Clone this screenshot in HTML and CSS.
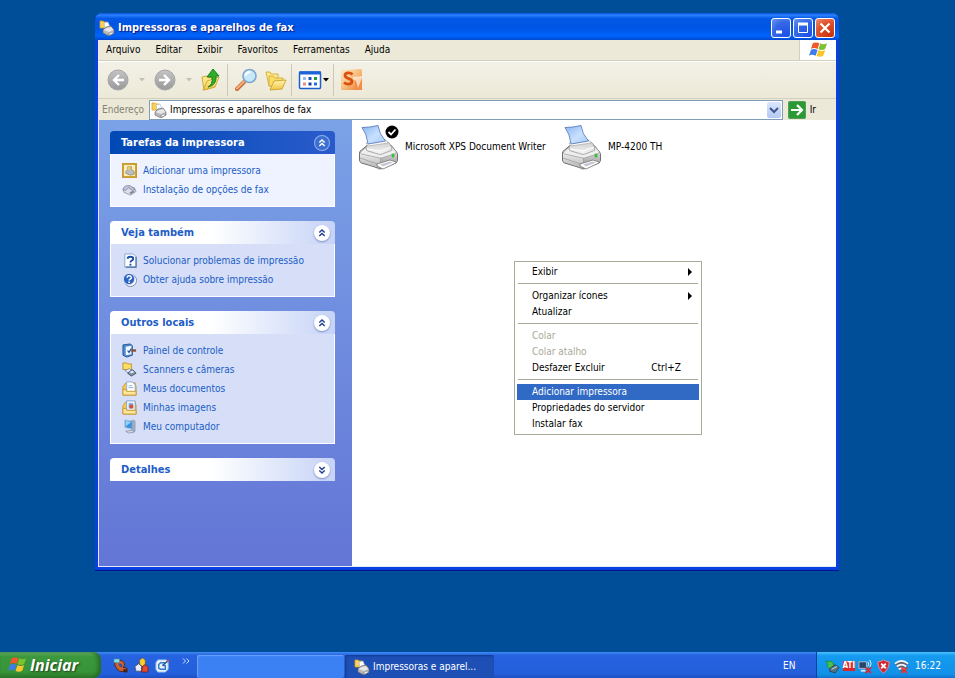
FILE: index.html
```html
<!DOCTYPE html>
<html lang="pt-BR">
<head>
<meta charset="utf-8">
<title>Impressoras e aparelhos de fax</title>
<link rel="stylesheet" href="styles.css">
</head>
<body>
<svg class="defs" aria-hidden="true">
  <defs>
    <linearGradient id="paper" x1="0" y1="0" x2="1" y2="1"><stop offset="0" stop-color="#86b4f2"/><stop offset=".55" stop-color="#c9e0fd"/><stop offset="1" stop-color="#a3cbfa"/></linearGradient>
    <linearGradient id="hood" x1="0" y1="0" x2="0" y2="1"><stop offset="0" stop-color="#cfcfcf"/><stop offset="1" stop-color="#f7f7f7"/></linearGradient>
    <linearGradient id="front" x1="0" y1="0" x2="0" y2="1"><stop offset="0" stop-color="#ededed"/><stop offset="1" stop-color="#b4b4b4"/></linearGradient>
    <linearGradient id="side" x1="0" y1="0" x2="0" y2="1"><stop offset="0" stop-color="#d6d6d6"/><stop offset="1" stop-color="#8c8c8c"/></linearGradient>
    <linearGradient id="grey" x1="0" y1="0" x2="0" y2="1"><stop offset="0" stop-color="#c4c4c4"/><stop offset="1" stop-color="#999"/></linearGradient>
    <linearGradient id="folder" x1="0" y1="0" x2="0" y2="1"><stop offset="0" stop-color="#fff6b0"/><stop offset="1" stop-color="#f0c445"/></linearGradient>
    <linearGradient id="office" x1="0" y1="0" x2="1" y2="1"><stop offset="0" stop-color="#fdeacb"/><stop offset=".5" stop-color="#f7bd7c"/><stop offset="1" stop-color="#ea7a30"/></linearGradient>
    <symbol id="printer" viewBox="0 0 42 46">
      <path d="M2 37l20 9 17-7v-3L22 41z" fill="#000" opacity=".25"/>
      <path d="M1.500 29q0-2 2-3l6-5h22q2 0 3 2l4 5q1 1 1 3v5q0 2-2 3l-13 5q-2 1-4 0L3.500 39q-2-1-2-3z" fill="#c4c4c4" stroke="#6f6f6f"/>
      <path d="M2 29l20.500 5v10.500L3.500 38Q2 37 2 36z" fill="url(#front)"/>
      <path d="M22.500 34L39 29v7q0 2-2 3l-14.500 6z" fill="url(#side)"/>
      <path d="M2.500 28l7-6 23-1 6 7q0 1-2 2l-13 4-2 0-18-4q-2-1-1-2z" fill="#eee" stroke="#8b8b8b" stroke-width=".6"/>
      <path d="M8 24q0-3 3-3l18-3q2 0 3 2l2 5q0 2-2 2l-8 3q-2 1-4 0l-10-3q-2 0-2-3z" fill="url(#hood)" stroke="#8c8c8c" stroke-width=".7"/>
      <path d="M9 25l12 2q2 0 4-1l8-3" fill="none" stroke="#fff"/>
      <path d="M2 34l20.500 7M22.500 34v10" fill="none" stroke="#9a9a9a" stroke-width=".7"/>
      <path d="M8 19l20-3 2 3-20 3z" fill="#fafafa" stroke="#a3a3a3" stroke-width=".6"/>
      <path d="M4 3.500q8 0 16-2Q21 10 27.500 17L10 20Q9 10 4 3.500z" fill="url(#paper)" stroke="#5b7cba" stroke-width=".9"/>
      <path d="M19 40l13-4 6 2v1l-13 6-6-3z" fill="#fff" stroke="#666" stroke-width=".7"/>
      <path d="M22 40.500l10-3 3 1-10 4z" fill="#c3c8d2"/>
      <rect x="34" y="30" width="2" height="3" fill="#35dd2f" stroke="#2b9a2c" stroke-width=".5"/>
    </symbol>
    <symbol id="printers" viewBox="0 0 16 16">
      <path d="M1 1h3l1 1h3v6H1z" fill="#fbd258" stroke="#dba028" stroke-width=".8"/>
      <path d="M5 3l4-1 2 5-5 2z" fill="#fff" stroke="#9db2d2" stroke-width=".6"/>
      <path d="M4 10l3-3 5-1 3 4v3l-5 3-6-3z" fill="#b9b9bc" stroke="#6b6b6e" stroke-width=".7"/>
      <path d="M4.500 10L8 8l4-1 2.500 3L10 12z" fill="#e6e6e6"/>
      <path d="M9 14l4-2 2 1-4 2z" fill="#fff" stroke="#666" stroke-width=".5"/>
    </symbol>
    <symbol id="flag" viewBox="0 0 20 18">
      <path d="M4 2q3-2 7 0L9 8Q5 6 2 8z" fill="#f0582b"/>
      <path d="M12 2q3 2 7 0l-2 6q-4 2-7 0z" fill="#7cc130"/>
      <path d="M2 9q3-2 7 0l-2 6q-4-2-7 0z" fill="#3f7ee8"/>
      <path d="M10 9q3 2 7 0l-2 6q-4 2-7 0z" fill="#fbc52c"/>
    </symbol>
    <symbol id="collapse" viewBox="0 0 18 18"><path d="M6 8.500l3-3 3 3M6 12.500l3-3 3 3" fill="none" stroke="currentColor" stroke-width="1.600"/></symbol>
    <symbol id="expand" viewBox="0 0 18 18"><path d="M6 5.500l3 3 3-3M6 9.500l3 3 3-3" fill="none" stroke="currentColor" stroke-width="1.600"/></symbol>
    <symbol id="down" viewBox="0 0 6 4"><path d="M0 0h6L3 3.500z" fill="currentColor"/></symbol>
  </defs>
</svg>

<div class="desktop">
  <main class="window">
    <header class="titlebar">
      <svg class="i16"><use href="#printers"/></svg>
      <h1>Impressoras e aparelhos de fax</h1>
      <button class="cap" aria-label="Minimizar"><svg viewBox="0 0 18 18"><path d="M4 13h6" stroke="#fff" stroke-width="3"/></svg></button>
      <button class="cap" aria-label="Maximizar"><svg viewBox="0 0 18 18"><path d="M4.500 5v8.500h9V5" fill="none" stroke="#fff"/><path d="M4 5h10" stroke="#fff" stroke-width="3"/></svg></button>
      <button class="cap close" aria-label="Fechar"><svg viewBox="0 0 18 18"><path d="M4.500 4.500l9 9m0-9l-9 9" stroke="#fff" stroke-width="2.200"/></svg></button>
    </header>

    <nav class="menubar" aria-label="Menu">
      <button>Arquivo</button><button>Editar</button><button>Exibir</button><button>Favoritos</button><button>Ferramentas</button><button>Ajuda</button>
      <span class="brand"><svg><use href="#flag"/></svg></span>
    </nav>

    <div class="toolbar">
      <button class="tool" aria-label="Voltar"><svg viewBox="0 0 24 24"><circle cx="12" cy="12" r="10" fill="url(#grey)" stroke="#a5a5a5"/><path d="M18 12H8m5-5l-5 5 5 5" fill="none" stroke="#fff" stroke-width="2.400"/></svg></button>
      <button class="drop off" aria-label="Histórico anterior"><svg><use href="#down"/></svg></button>
      <button class="tool" aria-label="Avançar"><svg viewBox="0 0 24 24"><circle cx="12" cy="12" r="10" fill="url(#grey)" stroke="#a5a5a5"/><path d="M6 12h10m-5-5l5 5-5 5" fill="none" stroke="#fff" stroke-width="2.400"/></svg></button>
      <button class="drop off" aria-label="Próximo histórico"><svg><use href="#down"/></svg></button>
      <button class="tool" aria-label="Acima"><svg viewBox="0 0 24 24"><path d="M2 9l5-1 2 2 6-2v11L4 22z" fill="#fbe68a" stroke="#d3aa36"/><path d="M3 22l4-9 12-4-4 10z" fill="url(#folder)" stroke="#d3aa36"/><path d="M8 19q5-2 4-10H7l6-8 6 7h-3q1 9-8 11z" fill="#2fae2c" stroke="#1a7f20"/></svg></button>
      <span class="rule"></span>
      <button class="tool" aria-label="Pesquisar"><svg viewBox="0 0 24 24"><path d="M3 21l7-7" stroke="#c76a35" stroke-width="4" stroke-linecap="round"/><path d="M3 20.500l7-7" stroke="#f4b27a" stroke-width="2" stroke-linecap="round"/><circle cx="15.500" cy="8" r="6.500" fill="#c6e8fb" stroke="#7fa6cf" stroke-width="1.600"/><path d="M11.500 7.500q1-4 5-3.500" fill="none" stroke="#fff" stroke-width="2"/></svg></button>
      <button class="tool" aria-label="Pastas"><svg viewBox="0 0 24 24"><path d="M2 4h4l1.500 2H14v10L5 18z" fill="#fce98e" stroke="#d6ac38" stroke-width=".9"/><path d="M5 18V8h4l2 2h8v8z" fill="#f9dc69" stroke="#d6ac38" stroke-width=".9"/><path d="M6 22l4-9 12-1-4 9z" fill="url(#folder)" stroke="#cda02a" stroke-width=".9"/></svg></button>
      <span class="rule"></span>
      <button class="tool" aria-label="Modos de exibição"><svg viewBox="0 0 24 24"><rect x="1.500" y="4" width="21" height="16.500" rx="1" fill="#fff" stroke="#1c5fca" stroke-width="1.500"/><path d="M1 5h22" stroke="#1c62d8" stroke-width="3"/><path d="M5 9h3v3H5z" fill="#9bb6e8"/><path d="M10.500 9h3v3h-3z" fill="#2453c8"/><path d="M16 9h3v3h-3z" fill="#249b3a"/><path d="M5 14.500h3v3H5z" fill="#e88d7d"/><path d="M10.500 14.500h3v3h-3z" fill="#1d3f9e"/><path d="M16 14.500h3v3h-3z" fill="#2c6fe0"/></svg></button>
      <button class="drop narrow" aria-label="Escolher modo"><svg><use href="#down"/></svg></button>
      <span class="rule"></span>
      <button class="tool" aria-label="Apresentações"><svg viewBox="0 0 24 24"><path d="M1 2l20-1 1 1v20H1z" fill="url(#office)"/><path d="M15 12l7-2v12h-7z" fill="#f28c48"/><path d="M13 9l9-1v2l-4 10-2-7-3-2z" fill="#fff2e2" opacity=".7"/><path d="M12.500 6.500C10 4 5 4.500 5 7.500c0 3.500 7 2.500 7 6 0 3-5 3.500-8 1" fill="none" stroke="#d9500f" stroke-width="2.800"/></svg></button>
    </div>

    <form class="address">
      <label for="path">Endereço</label>
      <div class="combo">
        <svg class="i16"><use href="#printers"/></svg>
        <input id="path" type="text" value="Impressoras e aparelhos de fax">
        <button type="button" aria-label="Abrir lista"><svg viewBox="0 0 10 8"><path d="M1 2l4 4 4-4" fill="none" stroke="#3f5687" stroke-width="2"/></svg></button>
      </div>
      <button class="go" type="button"><svg viewBox="0 0 18 18"><rect x=".5" y=".5" width="17" height="17" rx="1" fill="#2b9a35" stroke="#53a05a"/><path d="M3 9h11M9 4l5 5-5 5" fill="none" stroke="#fff" stroke-width="2.200"/></svg>Ir</button>
    </form>

    <div class="content">
      <aside class="tasks">
        <section class="box primary">
          <h2>Tarefas da impressora<button aria-label="Recolher"><svg><use href="#collapse"/></svg></button></h2>
          <ul>
            <li><a href="#"><svg viewBox="0 0 16 16"><rect x="1" y="1" width="14" height="14" fill="#f9eebb" stroke="#c79a2a" stroke-width="2"/><path d="M4 9l2-2V4h4v3l3 2v3l-4 1-5-2z" fill="#b9bdc6" stroke="#8a7d55" stroke-width=".7"/><path d="M6 4h3v3H6z" fill="#f5cf52"/></svg>Adicionar uma impressora</a></li>
            <li><a href="#"><svg viewBox="0 0 16 16"><path d="M1 8l5-3 7 1 2 4-6 4-7-3z" fill="#dedee8" stroke="#8a8a99" stroke-width=".8"/><path d="M1 8q1-5 8-4l5 4-3 1-4-3-3 3z" fill="#c4c4dc" stroke="#7d7d9c" stroke-width=".8"/><path d="M8 11l5-2v2l-4 2z" fill="#8087a0"/></svg>Instalação de opções de fax</a></li>
          </ul>
        </section>
        <section class="box">
          <h2>Veja também<button aria-label="Recolher"><svg><use href="#collapse"/></svg></button></h2>
          <ul>
            <li><a href="#"><svg viewBox="0 0 16 16"><path d="M3 1h9l3 3v11H3z" fill="#fff" stroke="#7fa3d2"/><path d="M15 4v11H4" fill="none" stroke="#4a6d9e" stroke-width="1.200"/><path d="M6 6q0-2 3-2t3 2c0 2-3 2-3 4" fill="none" stroke="#184fa5" stroke-width="2"/><path d="M8 11.500h2v2H8z" fill="#184fa5"/></svg>Solucionar problemas de impressão</a></li>
            <li><a href="#"><svg viewBox="0 0 16 16"><circle cx="9" cy="9" r="6.500" fill="#fff" stroke="#7184a8"/><circle cx="7.500" cy="7.500" r="6" fill="#2b62c4" stroke="#d8e3f8"/><path d="M5.500 6q0-2 2-2t2.500 2c0 1.500-2.500 1.500-2.500 3" fill="none" stroke="#fff" stroke-width="1.600"/><path d="M6.700 10h1.800v1.800H6.700z" fill="#fff"/></svg>Obter ajuda sobre impressão</a></li>
          </ul>
        </section>
        <section class="box">
          <h2>Outros locais<button aria-label="Recolher"><svg><use href="#collapse"/></svg></button></h2>
          <ul>
            <li><a href="#"><svg viewBox="0 0 16 16"><path d="M1 2l8-1 2 2v10l-6 2-4-2z" fill="#4d8ad4" stroke="#2a5590"/><path d="M4 4l6-1v9l-6 1z" fill="#f1f8ff"/><path d="M6 8l1.500 2L10 6" fill="none" stroke="#274f91" stroke-width="1.300"/><path d="M10 8l5 0" stroke="#8b5033" stroke-width="2.500"/></svg>Painel de controle</a></li>
            <li><a href="#"><svg viewBox="0 0 16 16"><path d="M1 1h4l1 1h4v6H1z" fill="#ffdc62" stroke="#c1922a"/><path d="M3 9l5-2 3 3-4 2z" fill="#dbe8f5" stroke="#7c8896" stroke-width=".8"/><path d="M6 12l5-4 4 4-5 3z" fill="#7f92ab" stroke="#46566b"/><path d="M8 11l3-2 2 2-3 1z" fill="#e5f0fb"/></svg>Scanners e câmeras</a></li>
            <li><a href="#"><svg viewBox="0 0 16 16"><path d="M1 6l3-4h10l1 4v9H1z" fill="#f5cb56" stroke="#c79a33"/><path d="M5 1h6l3 3v8H5z" fill="#fff" stroke="#8fabd0"/><path d="M7 5h4M7 7h5" stroke="#8caede"/><path d="M1 9h3l1 2h10v4H1z" fill="#ffe797" stroke="#c79a33"/></svg>Meus documentos</a></li>
            <li><a href="#"><svg viewBox="0 0 16 16"><path d="M1 6l3-4h10l1 4v9H1z" fill="#f5cb56" stroke="#c79a33"/><path d="M5 1h9v10H5z" fill="#fff" stroke="#7f9fc8"/><path d="M7 3h5v6H7z" fill="#7fb0e8"/><path d="M8 5h4v4H8z" fill="#d55038"/><path d="M1 9h3l1 2h10v4H1z" fill="#ffe797" stroke="#c79a33"/></svg>Minhas imagens</a></li>
            <li><a href="#"><svg viewBox="0 0 16 16"><path d="M3 1l8 1v9l-8-2z" fill="#3991e0" stroke="#b3c3d6"/><path d="M4 2l6 1-6 5z" fill="#97d2fb"/><path d="M11 1l3 1v11l-3 1z" fill="#a2afc2" stroke="#7c8ba1" stroke-width=".5"/><path d="M4 13l7-1 2 2-6 1z" fill="#d3dae4" stroke="#77859b" stroke-width=".7"/></svg>Meu computador</a></li>
          </ul>
        </section>
        <section class="box">
          <h2>Detalhes<button aria-label="Expandir"><svg><use href="#expand"/></svg></button></h2>
        </section>
      </aside>

      <div class="files">
        <div class="file">
          <svg class="big" viewBox="0 0 42 46"><use href="#printer"/><circle cx="34" cy="8" r="6.500" fill="#000"/><path d="M30.500 8l2.500 2.500 4.500-5" fill="none" stroke="#fff" stroke-width="1.800"/></svg>
          <span>Microsoft XPS Document Writer</span>
        </div>
        <div class="file">
          <svg class="big" viewBox="0 0 42 46"><use href="#printer"/></svg>
          <span>MP-4200 TH</span>
        </div>

        <div class="context" role="menu">
          <button role="menuitem">Exibir<i class="sub"></i></button>
          <hr>
          <button role="menuitem">Organizar ícones<i class="sub"></i></button>
          <button role="menuitem">Atualizar</button>
          <hr>
          <button role="menuitem" disabled>Colar</button>
          <button role="menuitem" disabled>Colar atalho</button>
          <button role="menuitem">Desfazer Excluir<kbd>Ctrl+Z</kbd></button>
          <hr>
          <button role="menuitem" class="active">Adicionar impressora</button>
          <button role="menuitem">Propriedades do servidor</button>
          <button role="menuitem">Instalar fax</button>
        </div>
      </div>
    </div>
  </main>

  <footer class="taskbar">
    <button class="start"><svg><use href="#flag"/></svg>Iniciar</button>
    <div class="quick">
      <button aria-label="Discador"><svg viewBox="0 0 16 16"><path d="M2 4q-1 6 5 10l8 1v-4l-4-1q3-4-1-7L5 2z" fill="#d3602b" stroke="#53220f"/><path d="M6 6q4-1 4 4l-3-1z" fill="#2853b0"/><path d="M11 12h4v3h-4z" fill="#3b2620"/><path d="M1 1h6v4H1z" fill="#7fe0ef" stroke="#487b8c" stroke-width=".6"/></svg></button>
      <button aria-label="Formas"><svg viewBox="0 0 16 16"><path d="M6 2l3-2 3 2v5L9 9 6 7z" fill="#f9cf34" stroke="#7d5a12" stroke-width=".7"/><path d="M1 9l4-3 3 3v5H2z" fill="#e9edf6" stroke="#34405e" stroke-width=".7"/><path d="M9 9l3-2 3 3v5H8z" fill="#e34a30" stroke="#611911" stroke-width=".7"/></svg></button>
      <button aria-label="Mostrar área de trabalho"><svg viewBox="0 0 16 16"><path d="M3 2h9l2 3v7l-3 3H3l-2-3V5z" fill="#e9f3ff" stroke="#9cc0ee"/><path d="M11 5H6L4 7v4l2 1h5V8H8" fill="none" stroke="#3579c4" stroke-width="1.500"/><path d="M8 8l6-5" stroke="#254f91" stroke-width="1.500"/><path d="M13 2h2v2h-2z" fill="#e3572f"/></svg></button>
      <button class="more" aria-label="Mais"><svg viewBox="0 0 8 6"><path d="M1 .5l2.500 2.500L1 5.500M4.500 .5L7 3 4.500 5.500" fill="none" stroke="#cfe0ff"/></svg></button>
    </div>
    <button class="task" aria-label="Janela"></button>
    <button class="task pressed"><svg class="i16"><use href="#printers"/></svg>Impressoras e aparel...</button>
    <span class="lang">EN</span>
    <div class="tray">
      <svg viewBox="0 0 16 16"><path d="M1 2l4 1 1-1 3 2v4l-3 3-4-3 1-2z" fill="#43c251" stroke="#19852b" stroke-width=".8"/><path d="M5 10l6-4 4 3-4 6-6-2z" fill="#56727f" stroke="#203c4c" stroke-width=".8"/><path d="M7 11l6-3" stroke="#c9e4ee"/></svg>
      <span class="ati">ATI</span>
      <svg viewBox="0 0 16 16"><path d="M1 3h8v7H1z" fill="#2c4266" stroke="#aebfd6"/><path d="M3 12.500h5" stroke="#dbe4f2" stroke-width="2"/><path d="M10.500 3q2 2.500 0 5m2-7q3 4 0 8" fill="none" stroke="#e9f6ff"/><path d="M8 9l6 6m0-6l-6 6" stroke="#e0262b" stroke-width="1.800"/></svg>
      <svg viewBox="0 0 16 16"><path d="M8 1q3 2 6 2 0 8-6 12Q2 11 2 3q3 0 6-2z" fill="#d3262f" stroke="#ee8f92"/><path d="M5.500 5l5 5m0-5l-5 5" stroke="#fff" stroke-width="2"/></svg>
      <svg viewBox="0 0 16 16"><path d="M1 5q7-6 14 0L8 14z" fill="#5c6275"/><path d="M1 5q7-6 14 0M3 8q5-4 10 0M5 11q3-2 6 0" fill="none" stroke="#f6f7fb" stroke-width="1.800"/><path d="M8 9l6 6m0-6l-6 6" stroke="#e8322f" stroke-width="2"/></svg>
      <time>16:22</time>
    </div>
  </footer>
</div>
</body>
</html>
```
FILE: styles.css
```css
* { box-sizing: border-box; }

body {
  margin: 0;
  font: 10px/16px "DejaVu Sans Condensed", "DejaVu Sans", sans-serif;
  color: #000;
}

button, input {
  font: inherit;
  color: inherit;
  border: 0;
  padding: 0;
  margin: 0;
  background: none;
}

svg { display: block; flex: none; }
.defs { position: absolute; width: 0; height: 0; }
.i16 { width: 16px; height: 16px; }

.desktop {
  min-height: 100vh;
  display: flex;
  flex-direction: column;
  background: #004e98;
}

/* Window frame */
.window {
  flex: 1;
  display: flex;
  flex-direction: column;
  margin: 13px 116px 82px 95px;
  border: 3px solid #0a3fe0;
  border-top: 0;
  border-radius: 7px 7px 0 0;
  background: #ece9d8;
  box-shadow: 0 1px 0 #00138c;
}

.titlebar {
  display: flex;
  align-items: center;
  gap: 2px;
  height: 27px;
  margin: 0 -3px;
  padding: 2px 4px 0;
  border-radius: 7px 7px 0 0;
  background: linear-gradient(#0a52d8, #2a80ff 8%, #0458e6 20%, #0054e3 55%, #0064fc 85%, #0048d0);
  color: #fff;
}

.titlebar h1 {
  flex: 1;
  margin: 0 0 0 1px;
  font-size: 11px;
  font-weight: bold;
  text-shadow: 1px 1px 1px #0a1883;
}

.cap {
  width: 20px;
  height: 20px;
  border: 1px solid #fff;
  border-radius: 3px;
  background: radial-gradient(circle at 80% 90%, #1c4fe8, #3568e6 60%, #6e94f2);
}

.cap svg { width: 18px; height: 18px; }
.close { background: radial-gradient(circle at 80% 90%, #c9330c, #e0512c 60%, #f08f71); }

/* Menu and tool bars */
.menubar {
  display: flex;
  align-items: stretch;
  gap: 15px;
  height: 21px;
  padding-left: 8px;
  border-bottom: 1px solid #d3cfbd;
}

.brand {
  display: grid;
  place-items: center;
  width: 37px;
  margin-left: auto;
  border-left: 1px solid #d3cfbd;
  background: #fff;
}

.brand svg { width: 19px; height: 18px; }

.toolbar {
  display: flex;
  align-items: center;
  height: 37px;
  padding-left: 8px;
  border-top: 1px solid #fff;
  background: linear-gradient(#f3f1e6, #ece9d8);
}

.tool, .tool svg { width: 24px; height: 24px; }
.drop { width: 23px; height: 24px; display: grid; place-items: center; }
.drop svg { width: 6px; height: 4px; }
.drop.off { color: #c4c1b4; }
.drop.narrow { width: 8px; }

.rule {
  width: 1px;
  height: 32px;
  margin: 0 6px 0 3px;
  background: #cdc9b6;
}

.tool + .tool { margin-left: 6px; }

.address {
  display: flex;
  align-items: center;
  gap: 5px;
  height: 22px;
  margin: 0;
  padding: 0 20px 0 4px;
  border-top: 1px solid #d3cfbd;
}

.address label { color: #858374; }

.combo {
  flex: 1;
  display: flex;
  align-items: center;
  gap: 3px;
  height: 20px;
  padding: 1px;
  border: 1px solid #7f9db9;
  background: #fff;
}

.combo input { flex: 1; min-width: 0; outline: 0; }

.combo button {
  display: grid;
  place-items: center;
  width: 14px;
  height: 16px;
  border-radius: 2px;
  background: linear-gradient(#dbe6ff, #b3c8f6);
}

.combo button svg { width: 10px; height: 8px; }
.go { display: flex; align-items: center; gap: 4px; }
.go svg { width: 18px; height: 18px; }

/* Task pane */
.content {
  flex: 1;
  display: flex;
  border: 1px solid #e3e9f5;
  border-width: 0 0 1px 1px;
}

.tasks {
  width: 253px;
  flex: none;
  display: flex;
  flex-direction: column;
  gap: 14px;
  padding: 11px 17px 14px 11px;
  background: linear-gradient(#7ba2e7, #6375d6);
}

.box h2 {
  display: flex;
  align-items: center;
  justify-content: space-between;
  height: 23px;
  margin: 0;
  padding: 0 5px 0 11px;
  border-radius: 4px 4px 0 0;
  background: linear-gradient(90deg, #fff 45%, #c6d3f7);
  font-size: 11px;
  font-weight: bold;
  line-height: 24px;
  color: #215dc6;
}

.box h2 button {
  width: 16px;
  height: 16px;
  border-radius: 50%;
  background: #fff;
  box-shadow: 0 1px 2px #7b8cc0;
  color: #1f3f94;
}

.box h2 button svg { width: 16px; height: 16px; }

.box ul {
  margin: 0;
  padding: 7px 11px;
  border: 1px solid #fff;
  border-top: 0;
  background: #d6dff7;
  list-style: none;
}

.box a {
  display: flex;
  align-items: center;
  gap: 6px;
  height: 19px;
  color: #215dc6;
  text-decoration: none;
}

.box a svg { width: 15px; height: 15px; }

.primary h2 { background: linear-gradient(90deg, #0049b5, #2a5bcc); color: #fff; }
.primary h2 button { background: #3c6fd2; box-shadow: inset 0 0 0 1px #8facea; color: #fff; }
.primary ul { background: #eff3ff; }

/* File list */
.files {
  position: relative;
  flex: 1;
  display: flex;
  align-items: flex-start;
  align-content: flex-start;
  flex-wrap: wrap;
  padding: 4px 6px;
  background: #fff;
}

.file { display: flex; align-items: center; gap: 5px; width: 203px; }
.file .big { width: 42px; height: 46px; }

.context {
  position: absolute;
  left: 162px;
  top: 141px;
  width: 188px;
  padding: 2px;
  border: 1px solid #aca899;
  background: #fff;
}

.context button {
  display: flex;
  align-items: center;
  justify-content: space-between;
  width: 100%;
  height: 16px;
  padding: 0 7px 0 15px;
  text-align: left;
}

.context button:disabled { color: #aca899; }
.context .active { background: #316ac5; color: #fff; }
.context kbd { margin-right: 11px; font: inherit; }

.context hr {
  height: 1px;
  margin: 3px 1px 4px;
  border: 0;
  background: #aca899;
}

.sub {
  border: 4px solid transparent;
  border-left-color: #000;
  border-right: 0;
}

/* Taskbar */
.taskbar {
  display: flex;
  align-items: stretch;
  height: 26px;
  background: linear-gradient(#3f8cf3, #2663e0 12%, #245edb 85%, #1d4fc0);
  color: #fff;
}

.start {
  display: flex;
  align-items: center;
  gap: 3px;
  width: 101px;
  padding-left: 8px;
  border-radius: 0 8px 8px 0;
  background: linear-gradient(#71b771, #3c983c 18%, #389438 75%, #2b7a2b);
  box-shadow: inset -3px 0 4px #236b23;
  font: italic bold 16px/24px "Open Sans", sans-serif;
  text-shadow: 1px 1px 2px #173f17;
}

.start svg { width: 19px; height: 18px; }

.quick { display: flex; align-items: center; gap: 6px; width: 96px; padding-left: 12px; }
.quick svg { width: 15px; height: 15px; }
.quick .more { align-self: flex-start; margin: 6px 0 0 6px; }
.quick .more svg { width: 8px; height: 6px; }

.task {
  display: flex;
  align-items: center;
  gap: 3px;
  width: 147px;
  margin: 3px 1px 0 0;
  padding-left: 9px;
  border-radius: 2px;
  background: #3c81f3;
  box-shadow: inset 1px 1px 1px #6ba2fa;
}

.task.pressed { width: 149px; background: #1d4fb5; box-shadow: inset 1px 1px 2px #123a8c; }

.lang { margin-left: auto; padding: 6px 20px 0 0; }

.tray {
  display: flex;
  align-items: center;
  gap: 3px;
  padding: 2px 14px 0 8px;
  border-left: 1px solid #0b3fa0;
  background: linear-gradient(#4cc0fb, #149bf0 14%, #1290e8 85%, #0d74cc);
}

.tray svg { width: 15px; height: 15px; }
.tray time { margin-left: 3px; }
.ati { background: #e1252b; font-size: 8px; font-weight: bold; line-height: 10px; }
```
